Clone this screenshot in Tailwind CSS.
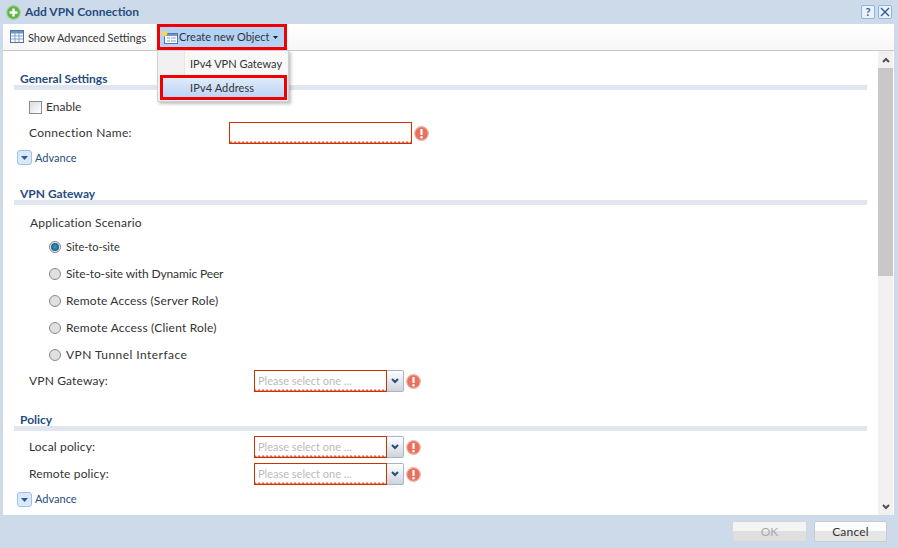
<!DOCTYPE html>
<html lang="en">
<head>
  <meta charset="UTF-8" />
  <title>Add VPN Connection</title>
  <script src="https://cdn.jsdelivr.net/npm/@tailwindcss/browser@4"></script>
</head>
<body class="w-[898px] h-[548px] overflow-hidden bg-[#cddaea] text-[12px] text-[#333] font-['Lato',sans-serif]">
  <div class="relative flex flex-col h-[548px] pl-[3px] pr-[4px]">
    <!-- Title bar -->
    <div class="flex items-center h-[24px] pl-[3px] shrink-0">
      <svg width="15" height="15" viewBox="0 0 15 15"><circle cx="7.5" cy="7.5" r="6.8" fill="#5fb544" stroke="#a5cfa0" stroke-width="1.2"/><path d="M7.5 3.5v8M3.5 7.5h8" stroke="#fff" stroke-width="2.4"/></svg>
      <span class="ml-[4px] text-[12px] font-bold text-[#264d7e] whitespace-nowrap">Add VPN Connection</span>
      <div class="ml-auto flex gap-[3px] mr-[2px]">
        <div class="w-[14px] h-[14px] rounded-[2px] border border-[#8fb4e0] bg-[#eaf2fb] text-[#3a5f94] text-[11px] leading-[12px] font-bold text-center">?</div>
        <div class="flex items-center justify-center w-[14px] h-[14px] rounded-[2px] border border-[#8fb4e0] bg-[#eaf2fb]">
          <svg width="10" height="10" viewBox="0 0 10 10"><path d="M1 1l8 8M9 1l-8 8" stroke="#2f5a93" stroke-width="1.4"/></svg>
        </div>
      </div>
    </div>

    <!-- Toolbar -->
    <div class="flex items-start h-[27px] shrink-0 pl-[7px] text-[11px] bg-gradient-to-b from-white to-[#f7f7f7] border-b border-[#c8c8c8]">
      <svg class="mt-[6px]" width="14" height="13" viewBox="0 0 14 13"><rect x=".5" y=".5" width="13" height="12" fill="#fff" stroke="#4f76ad"/><rect x="1" y="1" width="12" height="2.5" fill="#6f93c4"/><path d="M5 3v9M9 3v9M1 6h12M1 9h12" stroke="#7f9fcb"/></svg>
      <span class="ml-[4px] w-[119px] h-[26px] leading-[28px] whitespace-nowrap">Show Advanced Settings</span>
      <div class="ml-[10px] flex items-center h-[26px] w-[130px] pl-[1px] bg-[#b3d2f5] border-[3px] border-[#f00000]">
        <svg width="17" height="14" viewBox="0 0 17 14"><rect x="3.5" y="3.5" width="13" height="10" fill="#fff" stroke="#4f76ad"/><rect x="4" y="4" width="12" height="2" fill="#6f93c4"/><path d="M6 8h3M6 11h3M10 8h5M10 11h5" stroke="#7f9fcb"/><circle cx="3.5" cy="3.5" r="2.8" fill="#f7d84e"/></svg>
        <span class="ml-[1px] pt-[1px] whitespace-nowrap">Create new Object</span>
        <svg class="ml-[4px]" width="5" height="3" viewBox="0 0 5 3"><path d="M0 0h5L2.5 3z" fill="#222"/></svg>
      </div>
    </div>

    <!-- Scrolling form -->
    <div class="flex flex-1 min-h-0 bg-white">
      <div class="flex-1 pl-[11px] pr-[11px]">
        <h2 class="mt-[20px] h-[14px] leading-[16px] pl-[6px] font-bold text-[#264d7e]">General Settings</h2>
        <div class="h-[5px] bg-[#e1e5ef]"></div>
        <div class="mt-[10px] h-[14px] flex items-center pl-[15px]">
          <div class="w-[13px] h-[13px] border border-[#8d8d8d] bg-gradient-to-br from-[#dcdcdc] to-white"></div>
          <span class="ml-[4px]">Enable</span>
        </div>
        <div class="mt-[8px] h-[22px] flex items-center pl-[15px]">
          <span class="w-[200px] tracking-[.3px]">Connection Name:</span>
          <div class="w-[183px] h-[22px] border border-[#cc3300] bg-[linear-gradient(45deg,#e0553c_25%,transparent_25%),linear-gradient(-45deg,#e0553c_25%,transparent_25%)] bg-[length:4px_4px] bg-bottom bg-repeat-x"></div>
          <svg class="ml-[2px]" width="15" height="15" viewBox="0 0 15 15"><circle cx="7.5" cy="7.5" r="6.8" fill="#e8705c" stroke="#efb3a2" stroke-width="1.2"/><path d="M7.5 3v6" stroke="#fff" stroke-width="2.2"/><circle cx="7.5" cy="11.2" r="1.3" fill="#fff"/></svg>
        </div>
        <div class="mt-[6px] h-[15px] flex items-center pl-[3px] text-[11px] text-[#264d7e]">
          <div class="flex items-center justify-center w-[15px] h-[15px] rounded-[3px] border border-[#9fc0ea] bg-[#dbe8f9]">
            <svg width="7" height="4" viewBox="0 0 7 4"><path d="M0 0h7L3.5 4z" fill="#2f5a93"/></svg>
          </div>
          <span class="ml-[3px] pt-[1px]">Advance</span>
        </div>

        <h2 class="mt-[21px] h-[14px] leading-[16px] pl-[6px] font-bold text-[#264d7e]">VPN Gateway</h2>
        <div class="h-[5px] bg-[#e1e5ef]"></div>
        <p class="mt-[11px] h-[14px] leading-[14px] pl-[16px] tracking-[.2px]">Application Scenario</p>
        <div class="mt-[10px] flex flex-col gap-[13px] pl-[35px]">
          <div class="flex items-center h-[14px]">
            <div class="flex items-center justify-center w-[12px] h-[12px] rounded-full border border-[#8a8a8a] bg-[#e8e8e8]"><div class="w-[8px] h-[8px] rounded-full bg-radial from-[#3a9ad0] to-[#0c4a70]"></div></div>
            <span class="ml-[5px] text-[11px]">Site-to-site</span>
          </div>
          <div class="flex items-center h-[14px]">
            <div class="w-[12px] h-[12px] rounded-full border border-[#8a8a8a] bg-[#e0e0e0]"></div>
            <span class="ml-[5px] tracking-[-.13px]">Site-to-site with Dynamic Peer</span>
          </div>
          <div class="flex items-center h-[14px]">
            <div class="w-[12px] h-[12px] rounded-full border border-[#8a8a8a] bg-[#e0e0e0]"></div>
            <span class="ml-[5px] tracking-[.15px]">Remote Access (Server Role)</span>
          </div>
          <div class="flex items-center h-[14px]">
            <div class="w-[12px] h-[12px] rounded-full border border-[#8a8a8a] bg-[#e0e0e0]"></div>
            <span class="ml-[5px] tracking-[.2px]">Remote Access (Client Role)</span>
          </div>
          <div class="flex items-center h-[14px]">
            <div class="w-[12px] h-[12px] rounded-full border border-[#8a8a8a] bg-[#e0e0e0]"></div>
            <span class="ml-[5px] tracking-[.45px]">VPN Tunnel Interface</span>
          </div>
        </div>
        <div class="mt-[8px] h-[22px] flex items-center pl-[15px]">
          <span class="w-[225px] tracking-[.15px]">VPN Gateway:</span>
          <div class="w-[133px] h-[22px] pl-[3px] text-[11px] leading-[20px] text-[#bbb] whitespace-nowrap border border-[#cc3300] bg-[linear-gradient(45deg,#e0553c_25%,transparent_25%),linear-gradient(-45deg,#e0553c_25%,transparent_25%)] bg-[length:4px_4px] bg-bottom bg-repeat-x">Please select one ...</div>
          <div class="flex items-center justify-center w-[17px] h-[22px] rounded-r-[2px] border border-l-0 border-[#a9b5c6] bg-gradient-to-b from-white to-[#cfd4dc]">
            <svg width="8" height="6" viewBox="0 0 8 6"><path d="M1 1l3 3 3-3" fill="none" stroke="#264d7e" stroke-width="2"/></svg>
          </div>
          <svg class="ml-[2px]" width="15" height="15" viewBox="0 0 15 15"><circle cx="7.5" cy="7.5" r="6.8" fill="#e8705c" stroke="#efb3a2" stroke-width="1.2"/><path d="M7.5 3v6" stroke="#fff" stroke-width="2.2"/><circle cx="7.5" cy="11.2" r="1.3" fill="#fff"/></svg>
        </div>

        <h2 class="mt-[20px] h-[14px] leading-[16px] pl-[6px] font-bold text-[#264d7e]">Policy</h2>
        <div class="h-[5px] bg-[#e1e5ef]"></div>
        <div class="mt-[5px] h-[22px] flex items-center pl-[15px]">
          <span class="w-[225px] tracking-[.15px]">Local policy:</span>
          <div class="w-[133px] h-[22px] pl-[3px] text-[11px] leading-[20px] text-[#bbb] whitespace-nowrap border border-[#cc3300] bg-[linear-gradient(45deg,#e0553c_25%,transparent_25%),linear-gradient(-45deg,#e0553c_25%,transparent_25%)] bg-[length:4px_4px] bg-bottom bg-repeat-x">Please select one ...</div>
          <div class="flex items-center justify-center w-[17px] h-[22px] rounded-r-[2px] border border-l-0 border-[#a9b5c6] bg-gradient-to-b from-white to-[#cfd4dc]">
            <svg width="8" height="6" viewBox="0 0 8 6"><path d="M1 1l3 3 3-3" fill="none" stroke="#264d7e" stroke-width="2"/></svg>
          </div>
          <svg class="ml-[2px]" width="15" height="15" viewBox="0 0 15 15"><circle cx="7.5" cy="7.5" r="6.8" fill="#e8705c" stroke="#efb3a2" stroke-width="1.2"/><path d="M7.5 3v6" stroke="#fff" stroke-width="2.2"/><circle cx="7.5" cy="11.2" r="1.3" fill="#fff"/></svg>
        </div>
        <div class="mt-[5px] h-[22px] flex items-center pl-[15px]">
          <span class="w-[225px] tracking-[.15px]">Remote policy:</span>
          <div class="w-[133px] h-[22px] pl-[3px] text-[11px] leading-[20px] text-[#bbb] whitespace-nowrap border border-[#cc3300] bg-[linear-gradient(45deg,#e0553c_25%,transparent_25%),linear-gradient(-45deg,#e0553c_25%,transparent_25%)] bg-[length:4px_4px] bg-bottom bg-repeat-x">Please select one ...</div>
          <div class="flex items-center justify-center w-[17px] h-[22px] rounded-r-[2px] border border-l-0 border-[#a9b5c6] bg-gradient-to-b from-white to-[#cfd4dc]">
            <svg width="8" height="6" viewBox="0 0 8 6"><path d="M1 1l3 3 3-3" fill="none" stroke="#264d7e" stroke-width="2"/></svg>
          </div>
          <svg class="ml-[2px]" width="15" height="15" viewBox="0 0 15 15"><circle cx="7.5" cy="7.5" r="6.8" fill="#e8705c" stroke="#efb3a2" stroke-width="1.2"/><path d="M7.5 3v6" stroke="#fff" stroke-width="2.2"/><circle cx="7.5" cy="11.2" r="1.3" fill="#fff"/></svg>
        </div>
        <div class="mt-[7px] h-[15px] flex items-center pl-[3px] text-[11px] text-[#264d7e]">
          <div class="flex items-center justify-center w-[15px] h-[15px] rounded-[3px] border border-[#9fc0ea] bg-[#dbe8f9]">
            <svg width="7" height="4" viewBox="0 0 7 4"><path d="M0 0h7L3.5 4z" fill="#2f5a93"/></svg>
          </div>
          <span class="ml-[3px]">Advance</span>
        </div>
      </div>

      <!-- Scrollbar -->
      <div class="flex flex-col w-[15px] mr-[1px] bg-[#f1f1f1] shrink-0">
        <div class="flex items-center justify-center h-[17px]"><svg width="8" height="6" viewBox="0 0 8 6"><path d="M1 5l3-3 3 3" fill="none" stroke="#505050" stroke-width="2"/></svg></div>
        <div class="h-[208px] bg-[#c8c8c8]"></div>
        <div class="mt-auto flex items-center justify-center h-[17px]"><svg width="8" height="6" viewBox="0 0 8 6"><path d="M1 1l3 3 3-3" fill="none" stroke="#505050" stroke-width="2"/></svg></div>
      </div>
    </div>

    <!-- Footer -->
    <div class="flex justify-end items-center gap-[7px] h-[33px] shrink-0 pr-[7px]">
      <button class="w-[75px] h-[21px] rounded-[2px] border border-[#d4d8dc] bg-[linear-gradient(#f4f4f4_50%,#dfdfdf_50%)] text-[#aaa]">OK</button>
      <button class="w-[73px] h-[21px] rounded-[2px] border border-[#c8ccd0] tracking-[.2px] bg-[linear-gradient(#fcfcfc_50%,#e6e6e6_50%)]">Cancel</button>
    </div>

    <!-- Create new Object menu -->
    <div class="absolute left-[157px] top-[50px] w-[132px] h-[52px] flex flex-col text-[11px] bg-[#f2f2f2] border border-[#d0d0d0] shadow-[2px_2px_3px_rgba(0,0,0,0.25)]">
      <div class="h-[24px] leading-[25px] pl-[32px] whitespace-nowrap bg-gradient-to-r from-[#f0f0f0] from-[26px] via-[#d8d8d8] via-[26px] to-[#f8f8f8] to-[27px]">IPv4 VPN Gateway</div>
      <div class="h-[25px] leading-[19px] pl-[27px] ml-[2px] mr-[1px] whitespace-nowrap tracking-[.1px] bg-gradient-to-b from-[#dfeafa] to-[#bcd5f5] border-[3px] border-[#f00000]">IPv4 Address</div>
    </div>
  </div>
</body>
</html>
